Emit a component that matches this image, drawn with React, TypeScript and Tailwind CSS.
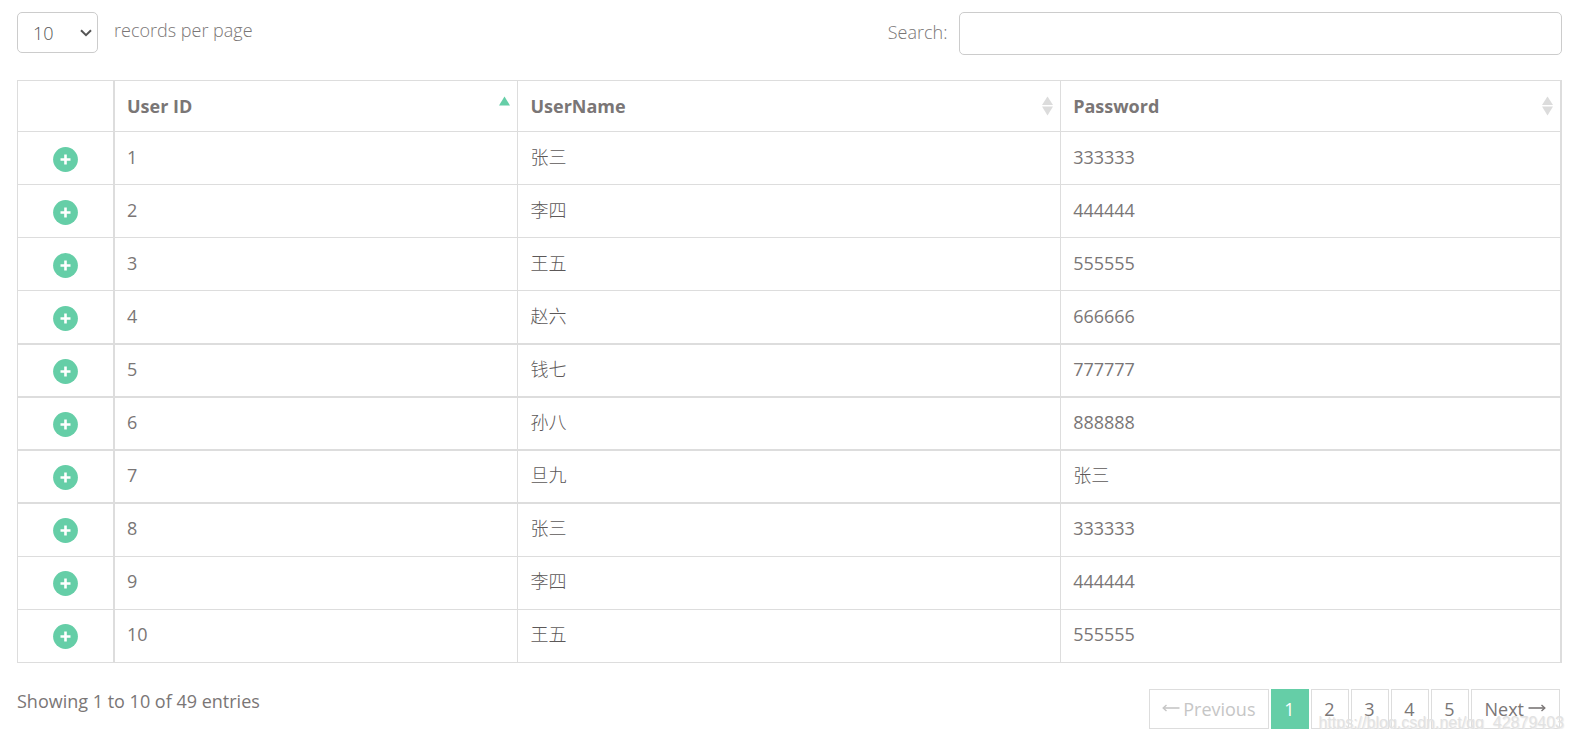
import React from "react";

const users: [number, string, string][] = [
  [1, "张三", "333333"],
  [2, "李四", "444444"],
  [3, "王五", "555555"],
  [4, "赵六", "666666"],
  [5, "钱七", "777777"],
  [6, "孙八", "888888"],
  [7, "旦九", "张三"],
  [8, "张三", "333333"],
  [9, "李四", "444444"],
  [10, "王五", "555555"],
];

const heavyRows = [4, 5, 6, 7];

function ExpandIcon() {
  return (
    <svg viewBox="0 0 25 25" className="block size-[25px]" aria-hidden="true">
      <circle cx="12.5" cy="12.5" r="12.4" fill="#65cea7" />
      <path d="M12.5 7.5v10M7.5 12.5h10" stroke="#fff" strokeWidth="2.6" />
    </svg>
  );
}

function SortIcon({ ascending = false }: { ascending?: boolean }) {
  return (
    <svg viewBox="0 0 11 20" className="block h-5 w-[11px]" aria-hidden="true">
      {ascending ? (
        <path d="M5.5 0.5L11 9.5H0z" fill="#65cea7" />
      ) : (
        <>
          <path d="M5.5 0.5L11 9H0z" fill="#dcdcdc" />
          <path d="M0 10.5H11L5.5 19.5z" fill="#dcdcdc" />
        </>
      )}
    </svg>
  );
}

function Arrow({ left = false }: { left?: boolean }) {
  return (
    <svg viewBox="0 0 18 8" className="mb-0.5 h-2 w-[18px]" fill="none" stroke="currentColor" aria-hidden="true">
      {left ? (
        <>
          <path d="M1.5 4H17.5" strokeWidth="1.6" />
          <path d="M4.5 1L1.2 4L4.5 7" strokeWidth="1.4" />
        </>
      ) : (
        <>
          <path d="M0.5 4H16.5" strokeWidth="1.6" />
          <path d="M13.5 1L16.8 4L13.5 7" strokeWidth="1.4" />
        </>
      )}
    </svg>
  );
}

function HeaderCell({ title, ascending, className }: { title: string; ascending?: boolean; className: string }) {
  return (
    <th scope="col" className={"border-b border-[#ddd] p-0 " + className}>
      <button type="button" className="flex h-[50px] w-full items-center justify-between pl-3 pr-[7px] font-bold">
        <span>{title}</span>
        <SortIcon ascending={ascending} />
      </button>
    </th>
  );
}

export default function App() {
  return (
    <main className="bg-white pl-[17px] pr-[10px] pt-3 font-['Open_Sans','Noto_Sans_CJK_SC',sans-serif] text-[18px] leading-[26px] text-[#7a7676]">
      <div className="flex items-start justify-between font-light">
        <label className="flex items-start gap-4">
          <span className="relative block">
            <select className="block h-[41px] w-[81px] appearance-none rounded-[5px] border border-[#ccc] bg-white pl-[15px] text-[#555]">
              <option>10</option>
              <option>25</option>
              <option>50</option>
              <option>100</option>
            </select>
            <svg viewBox="0 0 12 8" className="pointer-events-none absolute right-1.5 top-[17px] h-2 w-3" fill="none" stroke="#555" strokeWidth="2" aria-hidden="true">
              <path d="M1 1.2L6 6.2L11 1.2" />
            </svg>
          </span>
          <span className="pt-[5px]">records per page</span>
        </label>
        <label className="flex w-1/2 items-start justify-end gap-3">
          <span className="pt-[7px]">Search:</span>
          <input type="text" className="h-[43px] w-[78%] rounded-[5px] border border-[#ccc] bg-white px-3" />
        </label>
      </div>

      <table className="mt-[25px] w-full table-fixed border-separate border-spacing-0 border-l border-t border-[#ddd] text-left">
        <colgroup>
          <col className="w-[97px]" />
          <col className="w-[26.13%]" />
          <col className="w-[35.15%]" />
          <col />
        </colgroup>
        <thead>
          <tr>
            <td className="border-b border-r-2 border-[#ddd]" />
            <HeaderCell title="User ID" ascending className="border-r" />
            <HeaderCell title="UserName" className="border-r" />
            <HeaderCell title="Password" className="border-r-2" />
          </tr>
        </thead>
        <tbody>
          {users.map(([id, name, password]) => {
            const line = heavyRows.includes(id) ? "border-b-2" : "border-b";
            const cell = "border-[#ddd] px-3 pt-0 " + (id > 4 ? "pb-1 " : "pb-0.5 ") + line;
            const cjk = "font-light text-[#5c5858] ";
            return (
              <tr key={id} className={id === 4 ? "h-[54px]" : "h-[53px]"}>
                <td className={"border-r-2 border-[#ddd] p-0 " + line}>
                  <button type="button" aria-label="Show details" className={"mx-auto block " + (id > 4 ? "pt-px" : "pt-[3px]")}>
                    <ExpandIcon />
                  </button>
                </td>
                <td className={"border-r " + cell}>{id}</td>
                <td className={"border-r " + cjk + cell}>{name}</td>
                <td className={"border-r-2 " + (id === 7 ? cjk : "") + cell}>{password}</td>
              </tr>
            );
          })}
        </tbody>
      </table>

      <div className="flex items-start justify-between pt-[25px]">
        <p>Showing 1 to 10 of 49 entries</p>
        <nav aria-label="Pagination" className="relative mt-px flex gap-0.5 pr-0.5">
          <button type="button" disabled className="flex h-10 items-center gap-[3px] border border-[#ddd] px-3 text-[#c6c6c6]">
            <Arrow left />
            Previous
          </button>
          <button type="button" aria-current="page" className="h-10 w-[38px] border border-[#65cea7] bg-[#65cea7] text-white">
            1
          </button>
          {[2, 3, 4, 5].map((page) => (
            <button key={page} type="button" className="h-10 w-[38px] border border-[#ddd]">
              {page}
            </button>
          ))}
          <button type="button" className="flex h-10 items-center gap-1 border border-[#ddd] px-[13px]">
            Next
            <Arrow />
          </button>
          <span className="pointer-events-none absolute -right-0.5 top-[25px] whitespace-nowrap font-['Liberation_Sans',sans-serif] text-[16px] leading-[18px] text-[#e2e2e2] [text-shadow:1px_1px_1px_#ececec]">
            https://blog.csdn.net/qq_42879403
          </span>
        </nav>
      </div>
    </main>
  );
}
